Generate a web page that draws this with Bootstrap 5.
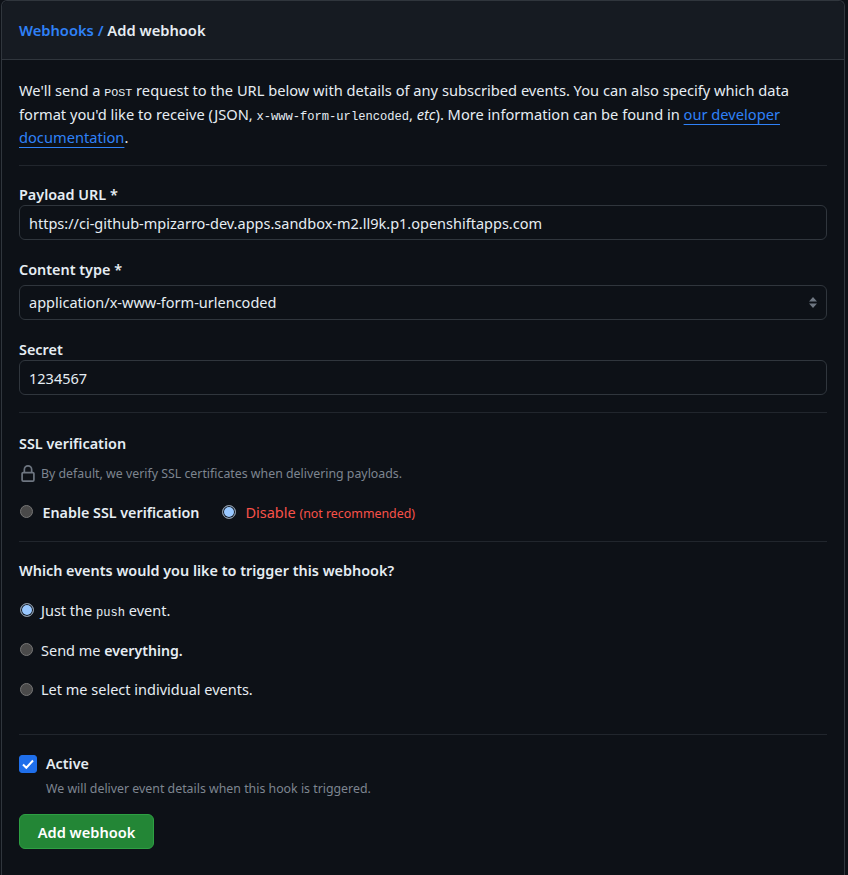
<!DOCTYPE html>
<html lang="en" data-bs-theme="dark">
<head>
<meta charset="utf-8">
<title>Add webhook</title>
<link href="https://cdn.jsdelivr.net/npm/bootstrap@5.3.0/dist/css/bootstrap.min.css" rel="stylesheet">
<style>
html,body{height:875px;overflow:hidden}
body{background:#0d1117;color:#e6edf3;font-family:"Noto Sans","Open Sans",sans-serif;font-size:14.5px;line-height:1.5;padding:0 3px 0 1px}
.hook-card{background:#0d1117;border:1px solid #30363d;border-bottom:0;border-radius:6px 6px 0 0;height:875px;--bs-card-bg:#0d1117}
.hook-head{background:#161b22;border-bottom:1px solid #30363d;height:59px;padding:0 17px;font-size:14.7px;font-weight:600;line-height:59px;border-radius:6px 6px 0 0}
.hook-head a,.hook-link{color:#2f81f7}
.hook-head a{text-decoration:none}
.hook-body{padding:19px 17px 0 17px}
.hook-intro{line-height:23.5px;margin:0;font-size:14.65px}
.hook-link{text-decoration:underline;text-underline-offset:4px;text-decoration-thickness:1px}
.hook-mono{font-family:"Liberation Mono",monospace;font-size:12.1px;line-height:1}
.hook-post{font-size:11.7px}
.hook-rule{border:0;border-top:1px solid #21262d;opacity:1;margin:0}
.hook-label{display:block;font-weight:600;font-size:14.4px;line-height:21px;margin:0}
.hook-input.form-control,.hook-input.form-select{background-color:#0d1117;border:1px solid #30363d;border-radius:6px;color:#e6edf3;font-size:14.5px;height:35px;padding:6px 9px 4px;box-shadow:none}
.hook-input.form-select{background-image:url("data:image/svg+xml,%3Csvg xmlns='http://www.w3.org/2000/svg' width='10' height='13' viewBox='0 0 10 13'%3E%3Cpath fill='%236e7681' d='M5 1l4 4.5H1zM5 12L1 7.5h8z'/%3E%3C/svg%3E");background-position:right 8px center;background-size:10px 13px}
.hook-muted{color:#7d8590;font-size:12.35px}
.hook-radio.form-check-input{width:13px;height:13px;margin:-2px 8px 0 1px;flex:none;background-color:#4a4a4a;border:1px solid #767676;background-image:none}
.hook-radio.form-check-input:checked{width:14px;height:14px;margin-left:.5px;margin-right:7.5px;background-color:#99c8ff;border:1px solid #8b949e;box-shadow:inset 0 0 0 1px #0d1117}
.hook-opt{display:flex;align-items:center;margin:0}
.hook-wide.form-check-input,.hook-wide.form-check-input:checked{margin-right:9.5px}
.hook-strong{font-weight:600;font-size:14.3px}
.hook-bold{font-weight:600;font-size:14.15px}
.hook-bad{color:#f85149}
.hook-small{font-size:12.4px}
.hook-check.form-check-input{width:18px;height:18px;margin:0 9px 0 0;flex:none;background-color:#1f6feb;border-color:#1f6feb;border-radius:3px;background-image:url("data:image/svg+xml,%3Csvg xmlns='http://www.w3.org/2000/svg' viewBox='0 0 18 18'%3E%3Cpath fill='none' stroke='%23fff' stroke-width='2' d='M4 9.5l3.3 3.3L14 5.5'/%3E%3C/svg%3E");background-size:18px 18px}
.hook-lock{margin-right:4px;flex:none}
.hook-note{padding-left:27px;margin-top:6px}
.hook-btn.btn{background:#238636;border:1px solid #2ea043;border-radius:6px;color:#fff;font-size:14.6px;font-weight:600;height:35px;width:135px;padding:1px 0 0;line-height:32px;margin-top:15px;display:block}
.hook-gap{margin-left:22px}
.m-15{margin-top:15px}.m-18{margin-top:18px}.m-17{margin-top:17px}.m-19{margin-top:19px}.m-20{margin-top:20px}.m-33{margin-top:33px}.m-11{margin-top:11px}
.m-below{margin-bottom:5px}
</style>
</head>
<body>
<div class="card hook-card">
  <div class="hook-head"><a href="#">Webhooks /</a> Add webhook</div>
  <form class="hook-body">
    <p class="hook-intro">We'll send a <span class="hook-mono hook-post">POST</span> request to the URL below with details of any subscribed events. You can also specify which data format you'd like to receive (JSON, <code class="hook-mono text-reset">x-www-form-urlencoded</code>, <em>etc</em>). More information can be found in <a class="hook-link" href="#">our developer documentation</a>.</p>
    <hr class="hook-rule m-15">
    <label class="hook-label m-18">Payload URL *</label>
    <input class="form-control hook-input" value="https://ci-github-mpizarro-dev.apps.sandbox-m2.ll9k.p1.openshiftapps.com">
    <label class="hook-label m-19 m-below">Content type *</label>
    <select class="form-select hook-input"><option>application/x-www-form-urlencoded</option></select>
    <label class="hook-label m-19">Secret</label>
    <input class="form-control hook-input" value="1234567">
    <hr class="hook-rule m-17">
    <div class="hook-label m-20">SSL verification</div>
    <div class="d-flex align-items-center hook-muted m-11">
      <svg class="hook-lock" width="18" height="18" viewBox="0 0 16 16" fill="#6e7681"><path d="M4 4a4 4 0 0 1 8 0v2h.25c.966 0 1.75.784 1.75 1.75v5.5A1.75 1.75 0 0 1 12.25 15h-8.5A1.75 1.75 0 0 1 2 13.25v-5.5C2 6.784 2.784 6 3.75 6H4Zm6.5 2V4a2.5 2.5 0 1 0-5 0v2ZM3.75 7.5a.25.25 0 0 0-.25.25v5.5c0 .138.112.25.25.25h8.5a.25.25 0 0 0 .25-.25v-5.5a.25.25 0 0 0-.25-.25Z"/></svg>
      <span>By default, we verify SSL certificates when delivering payloads.</span>
    </div>
    <div class="d-flex align-items-center m-19">
      <label class="hook-opt hook-strong"><input class="form-check-input hook-radio hook-wide" type="radio" name="ssl"><span>Enable SSL verification</span></label>
      <label class="hook-opt hook-gap"><input class="form-check-input hook-radio hook-wide" type="radio" name="ssl" checked><span class="hook-bad">Disable <span class="hook-small">(not recommended)</span></span></label>
    </div>
    <hr class="hook-rule m-17">
    <div class="hook-label m-18">Which events would you like to trigger this webhook?</div>
    <label class="hook-opt m-19"><input class="form-check-input hook-radio" type="radio" name="ev" checked><span>Just the <code class="hook-mono text-reset">push</code> event.</span></label>
    <label class="hook-opt m-18"><input class="form-check-input hook-radio" type="radio" name="ev"><span>Send me <strong class="hook-bold">everything.</strong></span></label>
    <label class="hook-opt m-18"><input class="form-check-input hook-radio" type="radio" name="ev"><span>Let me select individual events.</span></label>
    <hr class="hook-rule m-33">
    <label class="hook-opt hook-strong m-18"><input class="form-check-input hook-check" type="checkbox" checked><span>Active</span></label>
    <div class="hook-muted hook-note">We will deliver event details when this hook is triggered.</div>
    <button type="button" class="btn hook-btn">Add webhook</button>
  </form>
</div>
<script src="https://cdn.jsdelivr.net/npm/bootstrap@5.3.0/dist/js/bootstrap.bundle.min.js"></script>
</body>
</html>
